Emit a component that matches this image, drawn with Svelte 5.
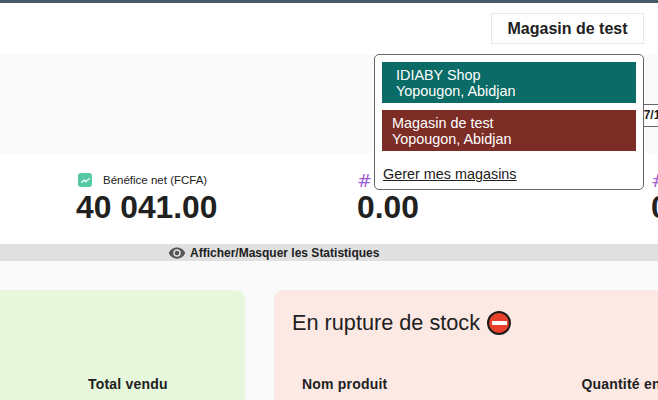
<script>
  const stats = [
    { label: 'Bénéfice net (FCFA)', value: '40 041.00', icon: true },
    { label: 'Ventes', value: '0.00' },
    { label: 'Ventes', value: '0.00' }
  ]
  const shops = [
    { name: 'IDIABY Shop', place: 'Yopougon, Abidjan', cls: 'green' },
    { name: 'Magasin de test', place: 'Yopougon, Abidjan', cls: 'red' }
  ]
</script>

<div class="page">
  <header>
    <button class="current">Magasin de test</button>
  </header>

  <section class="filters">
    <div class="date">07/11/2023</div>
  </section>

  <section class="stats">
    {#each stats as s}
      <div class="stat">
        <div class="label">
          {#if s.icon}
            <span class="badge">
              <svg width="9" height="9" viewBox="0 0 24 24" fill="none" stroke="#fff" stroke-width="3.500" stroke-linecap="round" stroke-linejoin="round"><path d="M2 17l6-6 5 4 9-8"/></svg>
            </span>
            <span>{s.label}</span>
          {:else}
            <span class="hash">#</span>
          {/if}
        </div>
        <div class="value">{s.value}</div>
      </div>
    {/each}
  </section>

  <div class="toggle">
    <svg width="18" height="18" viewBox="0 0 24 24" fill="#555"><path d="M12 4.500C7 4.500 2.700 7.600 1 12c1.700 4.400 6 7.500 11 7.500s9.300-3.100 11-7.500c-1.700-4.400-6-7.500-11-7.500zM12 17a5 5 0 1 1 0-10 5 5 0 0 1 0 10zm0-8a3 3 0 1 0 0 6 3 3 0 0 0 0-6z"/></svg>
    <span>Afficher/Masquer les Statistiques</span>
  </div>

  <section class="cards">
    <div class="card sold">
      <div class="cols"><b class="total">Total vendu</b></div>
    </div>
    <div class="card out">
      <h2>En rupture de stock <span class="stop"><i></i></span></h2>
      <div class="cols"><b>Nom produit</b><b>Quantité en stock</b></div>
    </div>
  </section>

  <div class="menu">
    {#each shops as shop}
      <div class="shop {shop.cls}">{shop.name}<br />{shop.place}</div>
    {/each}
    <a href="#shops">Gerer mes magasins</a>
  </div>
</div>

<style>
  :global(body) {
    margin: 0;
    overflow: hidden;
    background: #fff;
  }
  .page {
    position: relative;
    width: 658px;
    height: 400px;
    overflow: hidden;
    font-family: "Liberation Sans", Arial, sans-serif;
    color: #212121;
    background: #fafafa;
  }
  header {
    height: 51px;
    border-top: 3px solid #455a64;
    background: #fff;
    display: flex;
    justify-content: flex-end;
    align-items: flex-start;
    padding-right: 14px;
  }
  .current {
    margin-top: 10px;
    width: 153px;
    height: 31px;
    background: #fff;
    border: 1px solid #e8e8e8;
    font: bold 16px "Liberation Sans", Arial, sans-serif;
    color: #212121;
    padding: 0;
  }
  .filters {
    height: 99px;
    display: flex;
    padding-left: 643px;
    align-items: flex-start;
  }
  .date {
    margin-top: 50px;
    height: 21px;
    line-height: 21px;
    border-left: 1px solid #666;
    border-top: 1px solid #666;
    border-bottom: 1px solid #666;
    background: #fff;
    font-size: 12px;
    font-weight: bold;
    white-space: nowrap;
    text-indent: -7px;
  }
  .stats {
    height: 91px;
    background: #fff;
    display: grid;
    grid-template-columns: 281px 294px 100px;
    padding-left: 76px;
    padding-top: 18px;
    box-sizing: border-box;
  }
  .label {
    display: flex;
    align-items: center;
    gap: 11px;
    height: 18px;
    font-size: 11.5px;
  }
  .badge {
    width: 14px;
    height: 14px;
    margin-left: 2px;
    border-radius: 3px;
    background: #55c9a5;
    display: flex;
    align-items: center;
    justify-content: center;
  }
  .hash {
    color: #a05fd5;
    font-family: "DejaVu Sans", sans-serif;
    font-size: 18px;
  }
  .value {
    font-size: 31.800px;
    font-weight: bold;
    line-height: 36px;
    white-space: nowrap;
  }
  .toggle {
    height: 17px;
    background: #e0e0e0;
    display: flex;
    align-items: center;
    padding-left: 168px;
    gap: 4px;
    font-size: 12px;
    font-weight: bold;
  }
  .cards {
    display: flex;
    gap: 29px;
    margin-left: -20px;
    padding-top: 29px;
  }
  .card {
    height: 200px;
    border-radius: 9px;
    flex: none;
    box-sizing: border-box;
  }
  .sold {
    width: 265px;
    background: #e7f7dc;
    padding-top: 86px;
  }
  .out {
    width: 500px;
    background: #fde9e4;
    padding: 19px 18px 0;
  }
  h2 {
    margin: 0 0 39px;
    font-size: 21.700px;
    font-weight: normal;
    line-height: 28px;
    display: flex;
    align-items: center;
    gap: 1px;
    white-space: pre;
  }
  .stop {
    width: 24px;
    height: 24px;
    border-radius: 50%;
    background: #e8402a;
    border: 2px solid #1c1c1c;
    box-sizing: border-box;
    display: flex;
    align-items: center;
    justify-content: center;
  }
  .stop i {
    width: 15px;
    height: 4px;
    background: #fff;
  }
  .cols {
    display: flex;
    font-size: 14px;
    letter-spacing: 0.2px;
  }
  .total {
    margin-left: 108px;
  }
  .out .cols {
    padding-left: 10px;
    gap: 194px;
    white-space: nowrap;
  }
  .menu {
    position: absolute;
    left: 374px;
    top: 54px;
    width: 270px;
    height: 136px;
    box-sizing: border-box;
    background: #fff;
    border: 1px solid #666;
    border-radius: 5px;
    padding: 7px;
    display: flex;
    flex-direction: column;
    gap: 7px;
    font-size: 14.400px;
  }
  .shop {
    height: 41px;
    color: #fff;
    line-height: 16px;
    padding: 5px 0;
    box-sizing: border-box;
  }
  .green {
    background: #0b6b66;
    padding-left: 14px;
  }
  .red {
    background: #7b2d26;
    padding-left: 10px;
  }
  .menu a {
    color: #212121;
    margin-top: 7px;
    margin-left: 1px;
    line-height: 18px;
  }
</style>
